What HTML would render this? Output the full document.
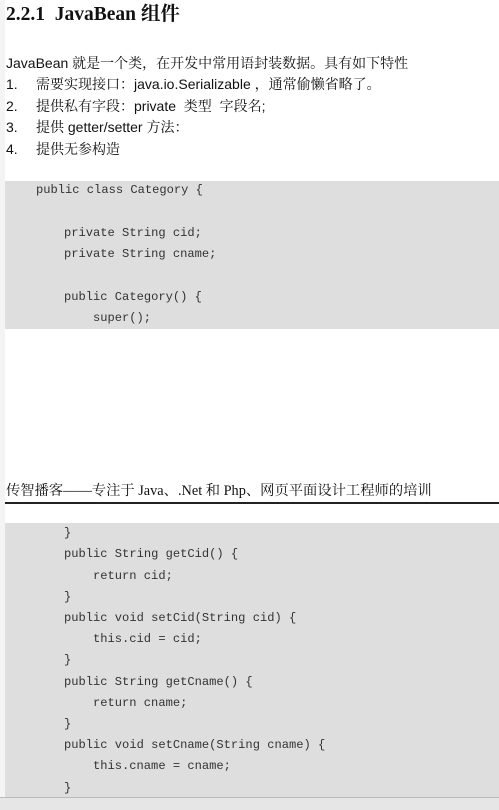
<!DOCTYPE html>
<html><head><meta charset="utf-8"><style>
html,body{margin:0;padding:0;width:499px;height:810px;overflow:hidden;background:#fff;position:relative}
.t{position:absolute;white-space:pre;line-height:1}
.h{font-family:"Liberation Serif","Noto Serif CJK SC",serif;font-weight:bold;font-size:19.5px;left:6px;top:5px;color:#111}
.b{font-family:"Liberation Sans","Noto Serif CJK SC",sans-serif;font-size:14px;color:#111}
.code{position:absolute;left:5px;width:494px;background:#dedede}
.c{position:absolute;font-family:"Liberation Mono",monospace;font-size:12.1px;color:#333;white-space:pre;line-height:1}
.f{font-family:"Liberation Serif","Noto Serif CJK SC",serif;font-size:14.3px;color:#111;left:6px;top:484px}
</style></head><body>
<div style="position:absolute;left:0;top:0;width:5px;height:810px;background:#f4f4f4"></div>
<div class="t h">2.2.1&nbsp;&nbsp;JavaBean 组件</div>
<div class="t b" style="left:6px;top:56px">JavaBean 就是一个类，在开发中常用语封装数据。具有如下特性</div>
<div class="t b" style="left:6px;top:77px">1.</div><div class="t b" style="left:36px;top:77px">需要实现接口：java.io.Serializable ，通常偷懒省略了。</div>
<div class="t b" style="left:6px;top:99px">2.</div><div class="t b" style="left:36px;top:99px">提供私有字段：private  类型  字段名;</div>
<div class="t b" style="left:6px;top:120px">3.</div><div class="t b" style="left:36px;top:120px">提供 getter/setter 方法：</div>
<div class="t b" style="left:6px;top:142px">4.</div><div class="t b" style="left:36px;top:142px">提供无参构造</div>

<div class="code" style="top:181px;height:148px"></div>
<div class="c" style="left:36px;top:184px">public class Category {</div>
<div class="c" style="left:64px;top:227px">private String cid;</div>
<div class="c" style="left:64px;top:248px">private String cname;</div>
<div class="c" style="left:64px;top:291px">public Category() {</div>
<div class="c" style="left:93px;top:312px">super();</div>

<div class="t f">传智播客——专注于 Java、.Net 和 Php、网页平面设计工程师的培训</div>
<div style="position:absolute;left:5px;top:502px;width:494px;height:2px;background:#222"></div>

<div class="code" style="top:523px;height:274px"></div>
<div class="c" style="left:64px;top:527px">}</div>
<div class="c" style="left:64px;top:548px">public String getCid() {</div>
<div class="c" style="left:93px;top:570px">return cid;</div>
<div class="c" style="left:64px;top:591px">}</div>
<div class="c" style="left:64px;top:612px">public void setCid(String cid) {</div>
<div class="c" style="left:93px;top:633px">this.cid = cid;</div>
<div class="c" style="left:64px;top:654px">}</div>
<div class="c" style="left:64px;top:676px">public String getCname() {</div>
<div class="c" style="left:93px;top:697px">return cname;</div>
<div class="c" style="left:64px;top:718px">}</div>
<div class="c" style="left:64px;top:739px">public void setCname(String cname) {</div>
<div class="c" style="left:93px;top:760px">this.cname = cname;</div>
<div class="c" style="left:64px;top:782px">}</div>
<div style="position:absolute;left:0;top:797px;width:499px;height:13px;background:#e6e6e6;border-top:1px solid #bbb"></div>
</body></html>
